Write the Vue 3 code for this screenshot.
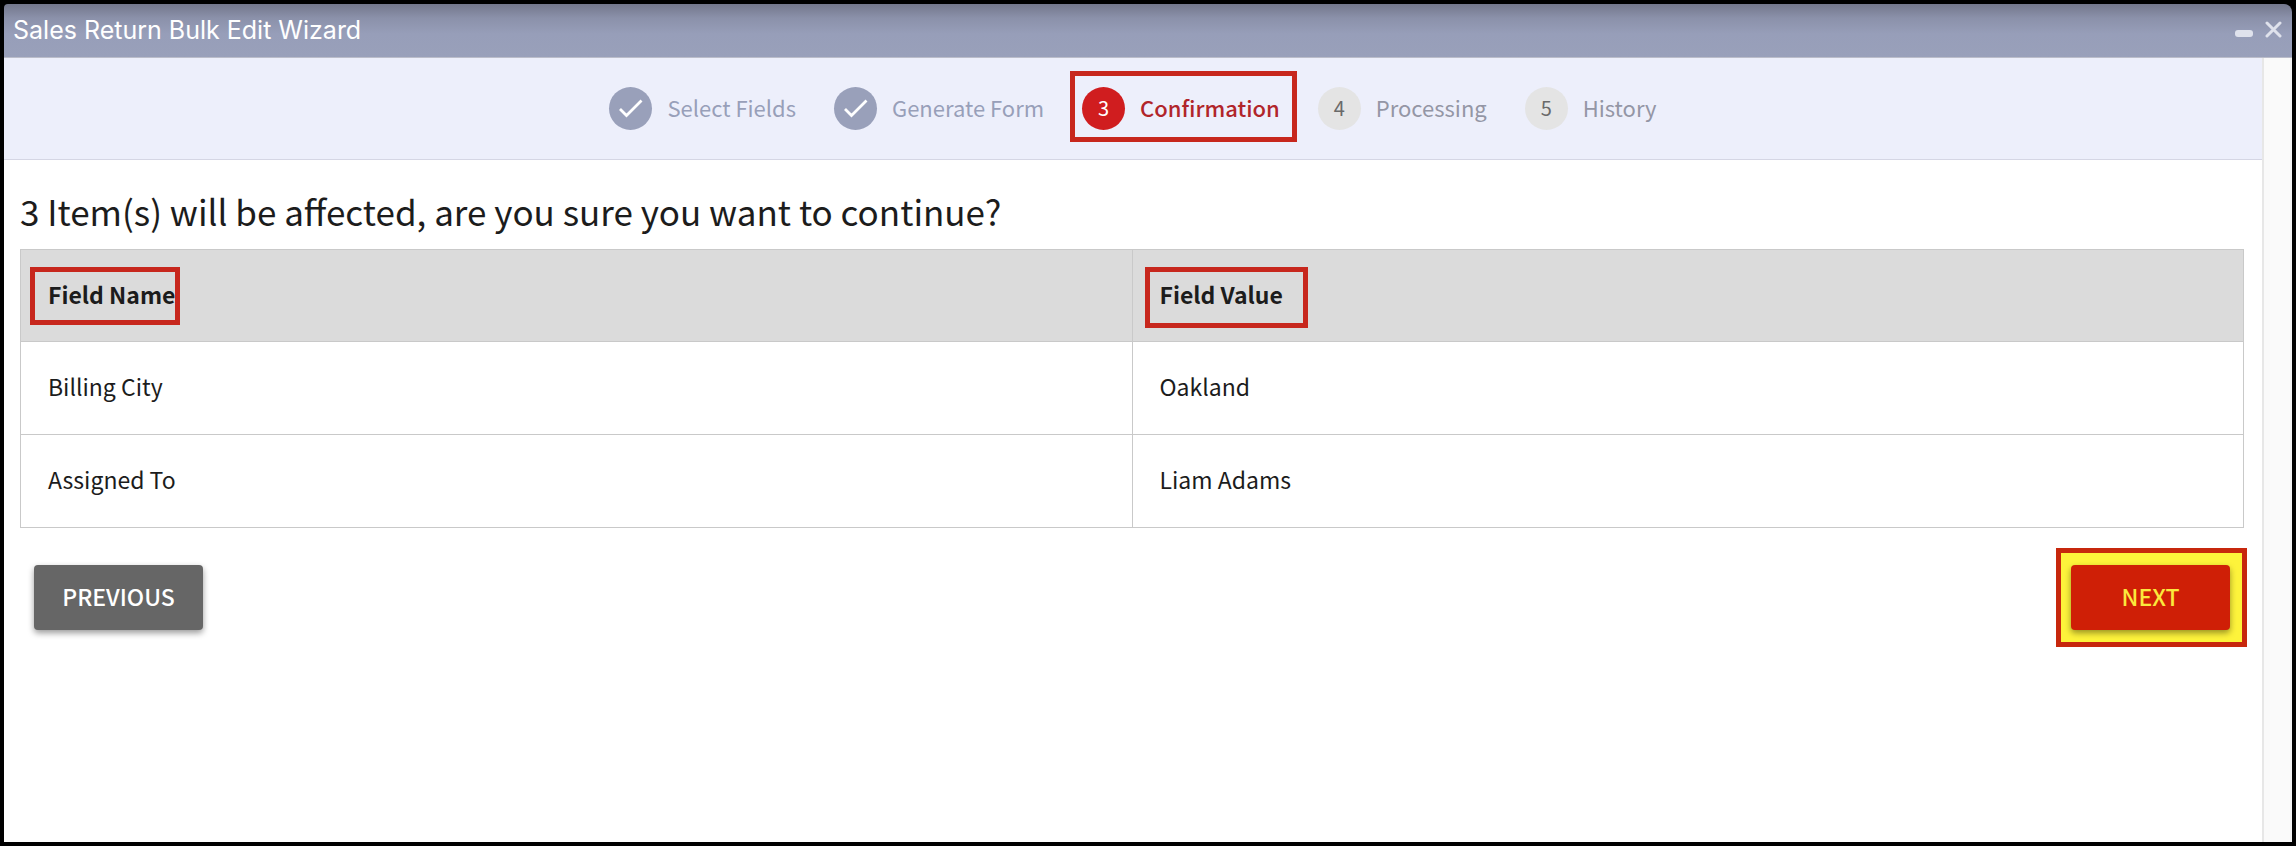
<script setup>
const steps = [
  { label: 'Select Fields', state: 'done' },
  { label: 'Generate Form', state: 'done' },
  { label: 'Confirmation', state: 'current' },
  { label: 'Processing', state: 'todo' },
  { label: 'History', state: 'todo' },
]
const rows = [
  { name: 'Billing City', value: 'Oakland' },
  { name: 'Assigned To', value: 'Liam Adams' },
]
</script>

<template>
  <div class="window">
    <header class="titlebar">
      <h1 class="title">Sales Return Bulk Edit Wizard</h1>
      <div class="controls">
        <button class="control" type="button" aria-label="Minimize">
          <svg width="20" height="20" viewBox="0 0 20 20"><rect x="1" y="9" width="18" height="7" rx="3" fill="#dfe2ec" /></svg>
        </button>
        <button class="control" type="button" aria-label="Close">
          <svg width="20" height="20" viewBox="0 0 20 20"><path d="M4 2L17 15M17 2L4 15" stroke="#dfe2ec" stroke-width="3" stroke-linecap="round" /></svg>
        </button>
      </div>
    </header>
    <div class="body">
      <main class="main">
        <ol class="stepper">
          <li v-for="(step, i) in steps" :key="step.label" class="step" :class="step.state">
            <span class="badge">
              <svg v-if="step.state === 'done'" width="43" height="43" viewBox="0 0 43 43"><path d="M11 22L17.500 28.500L32.500 13.500" fill="none" stroke="#fff" stroke-width="2.800" /></svg>
              <span v-else class="number">{{ i + 1 }}</span>
            </span>
            <span class="label">{{ step.label }}</span>
          </li>
        </ol>
        <section class="content">
          <h2 class="question">3 Item(s) will be affected, are you sure you want to continue?</h2>
          <table class="fields">
            <thead>
              <tr>
                <th scope="col"><span class="mark name-mark">Field Name</span></th>
                <th scope="col"><span class="mark value-mark">Field Value</span></th>
              </tr>
            </thead>
            <tbody>
              <tr v-for="row in rows" :key="row.name">
                <td>{{ row.name }}</td>
                <td>{{ row.value }}</td>
              </tr>
            </tbody>
          </table>
          <div class="actions">
            <button class="btn previous" type="button">PREVIOUS</button>
            <div class="next-frame"><button class="btn next" type="button">NEXT</button></div>
          </div>
        </section>
      </main>
      <div class="track"></div>
    </div>
  </div>
</template>

<style>
body {
  background: #000;
}
</style>

<style scoped>
.window {
  box-sizing: border-box;
  min-height: 100vh;
  border: 4px solid #000;
  display: flex;
  flex-direction: column;
  font-family: "Noto Sans CJK SC", "Noto Sans", sans-serif;
  font-size: 23px;
  line-height: 32px;
  color: #1c1c1c;
}
.titlebar {
  height: 53px;
  border-bottom: 1px solid #bbbdca;
  border-radius: 4px 8px 0 0;
  background: linear-gradient(#73778c, #8b91aa 14px, #979eb9 30px, #99a0ba);
  display: flex;
  justify-content: space-between;
  align-items: center;
  padding: 0 9px;
}
.title {
  margin: 0 0 2px;
  font: 400 25px/32px Inter, sans-serif;
  color: #fff;
}
.controls {
  display: flex;
  gap: 9px;
}
.control {
  border: 0;
  padding: 0;
  background: none;
  display: flex;
}
.body {
  flex: 1;
  display: flex;
}
.main {
  flex: 1;
  background: #fff;
}
.track {
  box-sizing: border-box;
  width: 30px;
  background: #fafafa;
  border: solid #e7e7e7;
  border-width: 0 2px;
  border-right-color: #f2f2f2;
}
.stepper {
  margin: 0;
  padding: 0;
  height: 101px;
  list-style: none;
  background: #edeffb;
  border-bottom: 1px solid #d5d6e4;
  display: flex;
  justify-content: center;
  align-items: center;
  gap: 38px;
}
.step {
  position: relative;
  display: flex;
  align-items: center;
  gap: 15px;
  font-size: 22px;
  color: #989fb9;
}
.label {
  padding-bottom: 4px;
}
.badge {
  width: 43px;
  height: 43px;
  border-radius: 50%;
  display: flex;
  align-items: center;
  justify-content: center;
  background: #e4e4e4;
  color: #6a6a6a;
  font-size: 20px;
}
.number {
  padding-bottom: 2px;
}
.done .badge {
  background: #99a0ba;
}
.todo {
  color: #9496a5;
}
.current {
  color: #b1252a;
  font-weight: 500;
}
.current .badge {
  background: #d01d1f;
  color: #fff;
  font-weight: 400;
}
.current::after {
  content: "";
  position: absolute;
  inset: -16px -17px -12px -12px;
  border: 5px solid #c7271d;
}
.content {
  padding: 27px 18px 0 16px;
}
.question {
  margin: 0 0 14px;
  font-size: 35px;
  line-height: 48px;
  font-weight: 400;
}
.fields {
  width: 100%;
  table-layout: fixed;
  border-collapse: collapse;
}
.fields th,
.fields td {
  height: 88px;
  padding: 0 27px 4px;
  border: 1px solid #c9c9c9;
  box-sizing: content-box;
  text-align: left;
}
.fields th {
  height: 87px;
  background: #dbdbdb;
}
.mark {
  position: relative;
}
.mark::after {
  content: "";
  position: absolute;
  border: 5px solid #c7271d;
}
.name-mark::after {
  inset: -10px -5px -14px -18px;
}
.value-mark::after {
  inset: -10px -25px -17px -15px;
}
.actions {
  margin-top: 20px;
  display: flex;
  justify-content: space-between;
  align-items: center;
}
.btn {
  height: 65px;
  border: 0;
  border-radius: 4px;
  padding: 0 0 4px;
  font: inherit;
  font-weight: 500;
  color: #fff;
  box-shadow: 0 3px 6px rgba(0, 0, 0, 0.4);
}
.previous {
  width: 169px;
  margin-left: 14px;
  background: #666;
}
.next {
  width: 159px;
  background: #cf1f06;
  color: #fbe83d;
}
.next-frame {
  margin-right: -3px;
  padding: 12px 12px 12px 10px;
  border: 5px solid #c7270d;
  background: #fdf33b;
  display: flex;
}
</style>
